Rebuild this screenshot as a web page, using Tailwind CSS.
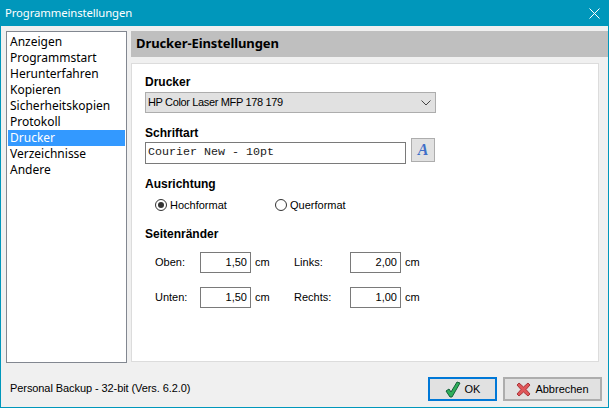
<!doctype html>
<html lang="de">
<head>
<meta charset="utf-8">
<script src="https://cdn.jsdelivr.net/npm/@tailwindcss/browser@4"></script>
</head>
<body class="m-0 bg-[#f0f0f0]">
<div class="w-[609px] h-[408px] flex flex-col overflow-hidden bg-[#f0f0f0] border-x border-b border-[#0097bb] text-[11px] text-[#000] font-['Liberation_Sans','Arial',sans-serif]">
  <div class="h-[26px] -mx-px shrink-0 bg-[#0097bb] flex items-center justify-between pl-[5px] pr-[9px] text-white">
    <span class="font-['Noto_Sans',sans-serif] text-[11.300px] tracking-[-0.1px]">Programmeinstellungen</span>
    <svg width="11" height="11" viewBox="0 0 11 11" fill="none" stroke="#fff" stroke-width="1"><path d="M.5.5l10 10M10.500.5l-10 10"/></svg>
  </div>
  <div class="flex pt-[5px] pl-[5px] h-[337px]">
    <ul class="w-[121px] h-[332px] border border-[#828790] bg-white p-[1px] pt-[2px] shrink-0 text-[12px] font-['Noto_Sans',sans-serif]">
      <li class="h-[16px] leading-[16px] pl-[2px]">Anzeigen</li>
      <li class="h-[16px] leading-[16px] pl-[2px]">Programmstart</li>
      <li class="h-[16px] leading-[16px] pl-[2px]">Herunterfahren</li>
      <li class="h-[16px] leading-[16px] pl-[2px]">Kopieren</li>
      <li class="h-[16px] leading-[16px] pl-[2px]">Sicherheitskopien</li>
      <li class="h-[16px] leading-[16px] pl-[2px]">Protokoll</li>
      <li class="h-[16px] leading-[16px] pl-[2px] bg-[#3399ff] text-white">Drucker</li>
      <li class="h-[16px] leading-[16px] pl-[2px]">Verzeichnisse</li>
      <li class="h-[16px] leading-[16px] pl-[2px]">Andere</li>
    </ul>
    <div class="ml-[4px] w-[477px] flex flex-col">
      <div class="h-[26px] bg-[#bfbfbf] flex items-center pl-[5px] font-bold text-[13px] font-['Noto_Sans',sans-serif] tracking-[-0.1px]">Drucker-Einstellungen</div>
      <div class="mt-[6px] w-[468px] h-[299px] bg-white border border-[#dcdcdc] pl-[13px] flex flex-col">
        <div class="mt-[10px] h-[16px] leading-[16px] font-bold text-[12px]">Drucker</div>
        <div class="mt-[2px] w-[291px] h-[21px] bg-[#e1e1e1] border border-[#adadad] flex items-center justify-between pl-[2px] pr-[4px]">
          <span class="tracking-[-0.35px]">HP Color Laser MFP 178 179</span>
          <svg width="10" height="6" viewBox="0 0 10 6" fill="none" stroke="#444" stroke-width="1"><path d="M.5.5L5 5 9.500.5"/></svg>
        </div>
        <div class="mt-[12px] h-[16px] leading-[16px] font-bold text-[12px]">Schriftart</div>
        <div class="mt-[1px] flex items-start gap-[5px] h-[22px]">
          <div class="w-[261px] h-[22px] border border-[#7a7a7a] bg-white flex items-center pl-[2px] text-[11.670px] font-['Liberation_Mono',monospace] text-[#1a1a1a]">Courier New - 10pt</div>
          <div class="-mt-[4px] w-[24px] h-[24px] border border-[#adadad] bg-[#e1e1e1] flex items-center justify-center font-['Liberation_Serif',serif] font-bold italic text-[16px] leading-none text-[#3f6fc8]">A</div>
        </div>
        <div class="mt-[12px] h-[16px] leading-[16px] font-bold text-[12px]">Ausrichtung</div>
        <div class="mt-[5px] h-[16px] pl-[10px] flex items-center">
          <div class="w-[120px] flex items-center gap-[3px]">
            <span class="w-[12px] h-[12px] rounded-full border border-[#333] flex items-center justify-center"><span class="w-[6px] h-[6px] rounded-full bg-[#333]"></span></span>
            <span>Hochformat</span>
          </div>
          <div class="flex items-center gap-[3px]">
            <span class="w-[12px] h-[12px] rounded-full border border-[#333]"></span>
            <span>Querformat</span>
          </div>
        </div>
        <div class="mt-[13px] h-[16px] leading-[16px] font-bold text-[12px]">Seitenränder</div>
        <div class="mt-[10px] h-[21px] pl-[10px] flex items-center">
          <span class="w-[45px]">Oben:</span>
          <span class="w-[51px] h-[21px] border border-[#7a7a7a] flex items-center justify-end pr-[3px]">1,50</span>
          <span class="ml-[4px] w-[39px]">cm</span>
          <span class="w-[56px]">Links:</span>
          <span class="w-[51px] h-[21px] border border-[#7a7a7a] flex items-center justify-end pr-[3px]">2,00</span>
          <span class="ml-[4px]">cm</span>
        </div>
        <div class="mt-[14px] h-[21px] pl-[10px] flex items-center">
          <span class="w-[45px]">Unten:</span>
          <span class="w-[51px] h-[21px] border border-[#7a7a7a] flex items-center justify-end pr-[3px]">1,50</span>
          <span class="ml-[4px] w-[39px]">cm</span>
          <span class="w-[56px]">Rechts:</span>
          <span class="w-[51px] h-[21px] border border-[#7a7a7a] flex items-center justify-end pr-[3px]">1,00</span>
          <span class="ml-[4px]">cm</span>
        </div>
      </div>
    </div>
  </div>
  <div class="flex-1 flex items-start pl-[9px] pr-[6px]">
    <span class="mt-[17px] leading-[16px] tracking-[-0.08px]">Personal Backup - 32-bit (Vers. 6.2.0)</span>
    <div class="ml-auto mt-[14px] flex gap-[6px]">
      <div class="w-[69px] h-[24px] border-2 border-[#0078d7] bg-[#e1e1e1] flex items-center justify-center gap-[4px]">
        <svg width="16" height="17" viewBox="0 0 16 17"><path d="M1 10l3-2 2 3 6-10 3 1-8 14H5z" fill="#2fae5a" stroke="#14603a" stroke-width="1" stroke-linejoin="round"/></svg>
        <span>OK</span>
      </div>
      <div class="w-[99px] h-[24px] border-2 border-[#adadad] bg-[#e1e1e1] flex items-center justify-center gap-[4px]">
        <svg width="15" height="15" viewBox="0 0 15 15"><path d="M1 3l2-2 4.500 4L12 1l2 2-4 4.500 4 4.500-2 2-4.500-4L3 14l-2-2 4-4.500z" fill="#e0575a" stroke="#a9353a" stroke-width="1" stroke-linejoin="round"/></svg>
        <span>Abbrechen</span>
      </div>
    </div>
  </div>
</div>
</body>
</html>
